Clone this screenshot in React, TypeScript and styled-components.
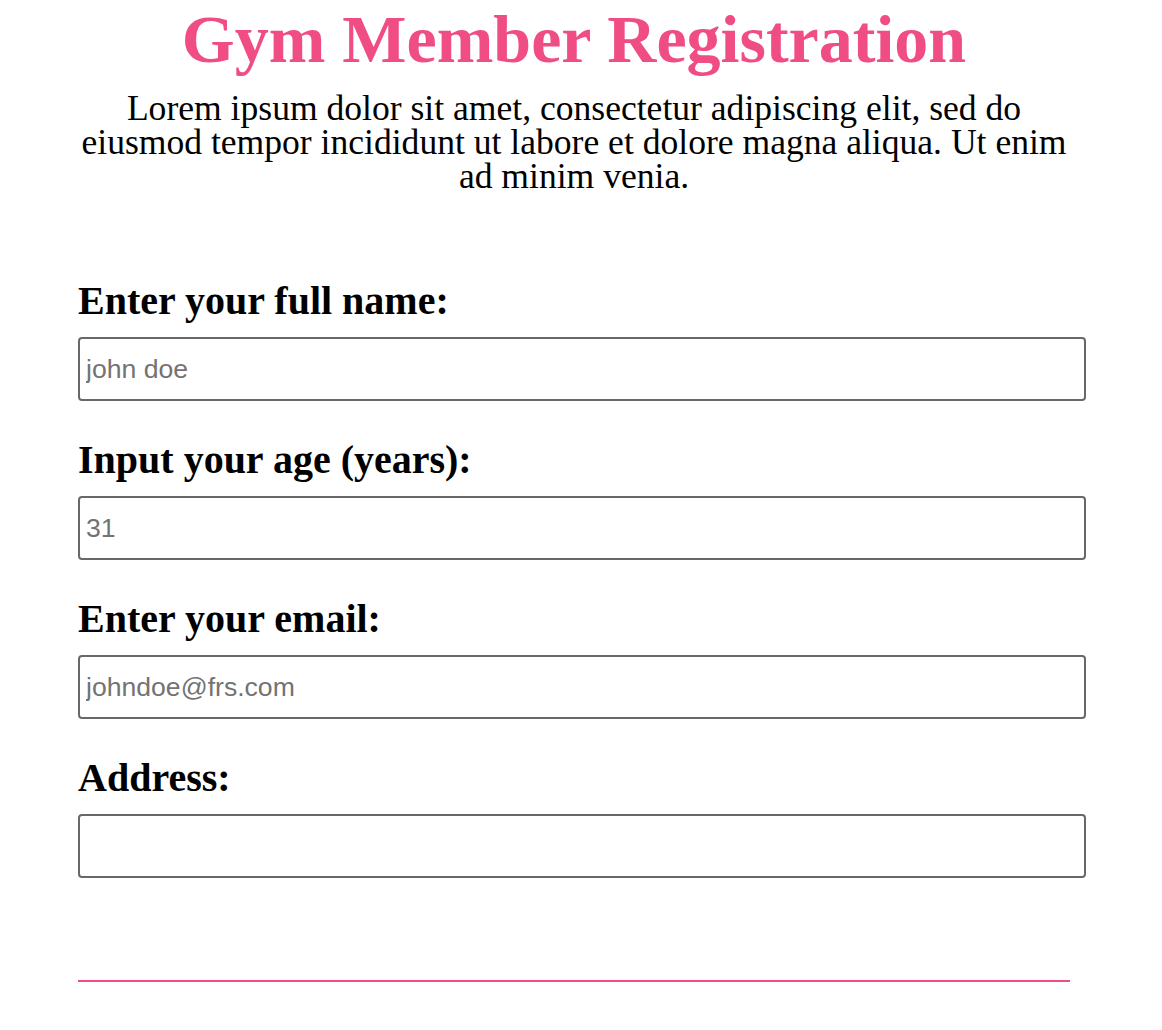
import React from "react";
import styled, { createGlobalStyle } from "styled-components";

const GlobalStyle = createGlobalStyle`
  html, body {
    margin: 0;
    padding: 0;
    background: #ffffff;
  }
  body {
    font-family: "Liberation Serif", "Times New Roman", serif;
    color: #000000;
  }
`;

const Page = styled.main`
  width: 992px;
  margin-left: 78px;
  padding-bottom: 40px;
`;

const Title = styled.h1`
  margin: 0;
  font-size: 68px;
  line-height: 78px;
  font-weight: 700;
  color: #ef4d84;
  text-align: center;
`;

const Intro = styled.p`
  margin: 13px 0 0;
  font-size: 35.6px;
  line-height: 34px;
  text-align: center;
`;

const Form = styled.form`
  margin-top: 85px;
  display: flex;
  flex-direction: column;
  gap: 36px;
`;

const Field = styled.div`
  display: flex;
  flex-direction: column;
`;

const Label = styled.label`
  display: block;
  font-size: 40px;
  line-height: 46px;
  font-weight: 700;
  margin-bottom: 13px;
`;

const Input = styled.input`
  box-sizing: border-box;
  width: calc(100% + 16px);
  height: 64px;
  padding: 0 6px;
  border: 2px solid #686868;
  border-radius: 4px;
  font-family: "Liberation Sans", Arial, sans-serif;
  font-size: 26.6px;
  color: #000;
  background: #fff;
  outline: none;
  &::placeholder {
    color: #737373;
    opacity: 1;
  }
`;

const Divider = styled.hr`
  margin: 102px 0 0;
  border: none;
  height: 2px;
  background: #ef4d84;
`;

const fields = [
  { id: "name", label: "Enter your full name:", placeholder: "john doe", type: "text" },
  { id: "age", label: "Input your age (years):", placeholder: "31", type: "text" },
  { id: "email", label: "Enter your email:", placeholder: "johndoe@frs.com", type: "email" },
  { id: "address", label: "Address:", placeholder: "", type: "text" },
];

export default function App() {
  return (
    <>
      <GlobalStyle />
      <Page>
        <Title>Gym Member Registration</Title>
        <Intro>
          Lorem ipsum dolor sit amet, consectetur adipiscing elit, sed do eiusmod tempor
          incididunt ut labore et dolore magna aliqua. Ut enim ad minim venia.
        </Intro>
        <Form onSubmit={(e) => e.preventDefault()}>
          {fields.map((f) => (
            <Field key={f.id}>
              <Label htmlFor={f.id}>{f.label}</Label>
              <Input id={f.id} type={f.type} placeholder={f.placeholder} />
            </Field>
          ))}
        </Form>
        <Divider />
      </Page>
    </>
  );
}
